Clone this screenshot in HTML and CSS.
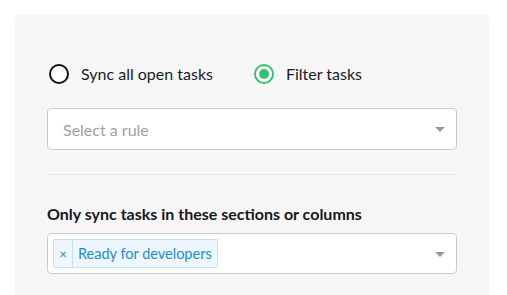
FILE: index.html
```html
<!DOCTYPE html>
<html>
<head>
<meta charset="utf-8">
<link rel="stylesheet" href="styles.css">
</head>
<body>
<div class="panel">
  <div class="radios">
    <label class="radio"><span class="circle"></span><span class="radio-text">Sync all open tasks</span></label>
    <label class="radio"><span class="circle checked"></span><span class="radio-text">Filter tasks</span></label>
  </div>
  <div class="select select-rule">
    <span class="placeholder">Select a rule</span>
    <span class="arrow"></span>
  </div>
  <div class="divider"></div>
  <div class="field-label">Only sync tasks in these sections or columns</div>
  <div class="select select-multi">
    <span class="tag"><span class="tag-remove">×</span><span class="tag-label">Ready for developers</span></span>
    <span class="arrow"></span>
  </div>
</div>
</body>
</html>
```
FILE: styles.css
```css
html, body {
  margin: 0;
  padding: 0;
  background: #ffffff;
  font-family: Lato, "Open Sans", sans-serif;
  color: #1b1b2d;
  overflow: hidden;
}
.panel {
  margin: 14px 0 0 15px;
  width: 474px;
  height: 281px;
  box-sizing: border-box;
  background: #f6f6f6;
  border-radius: 4px 4px 0 0;
  padding: 50px 32px 0 32px;
}
.radios {
  display: flex;
  align-items: center;
  gap: 41px;
  padding-left: 2px;
}
.radio {
  display: flex;
  align-items: center;
  gap: 12px;
  font-size: 16px;
  line-height: 19px;
  height: 20px;
}
.radio-text {
  margin-top: -1px;
}
.circle {
  width: 20px;
  height: 20px;
  box-sizing: border-box;
  border: 2px solid #111118;
  border-radius: 50%;
  background: #fff;
  display: flex;
  align-items: center;
  justify-content: center;
}
.circle.checked {
  border-color: #36c172;
}
.circle.checked::after {
  content: "";
  width: 10px;
  height: 10px;
  border-radius: 50%;
  background: #36c172;
}
.select {
  position: relative;
  margin-top: 24px;
  height: 42px;
  box-sizing: border-box;
  background: #fff;
  border: 1px solid #cccccc;
  border-radius: 4px;
  display: flex;
  align-items: center;
}
.select-rule {
  padding-left: 15px;
}
.placeholder {
  font-size: 16px;
  color: #a0a0a0;
  line-height: 19px;
}
.arrow {
  position: absolute;
  right: 11px;
  top: 50%;
  margin-top: -2px;
  width: 0;
  height: 0;
  border-style: solid;
  border-width: 5px 5px 0 5px;
  border-color: #999 transparent transparent transparent;
}
.divider {
  margin-top: 24px;
  height: 1px;
  background: #e6e6e6;
}
.field-label {
  margin-top: 29px;
  font-size: 16px;
  line-height: 19px;
  font-weight: 700;
  color: #16161f;
}
.select-multi {
  margin-top: 10px;
  height: 41px;
  padding-left: 5px;
}
.tag {
  display: flex;
  align-items: stretch;
  height: 29px;
  box-sizing: border-box;
  background: #eef7fd;
  border: 1px solid #c4e2f7;
  border-radius: 2px;
  color: #1e8ad6;
}
.tag-remove {
  width: 18px;
  border-right: 1px solid #c4e2f7;
  display: flex;
  align-items: center;
  justify-content: center;
  font-size: 13px;
}
.tag-label {
  display: flex;
  align-items: center;
  padding: 0 5px 0 5px;
  font-size: 14.5px;
}
```
